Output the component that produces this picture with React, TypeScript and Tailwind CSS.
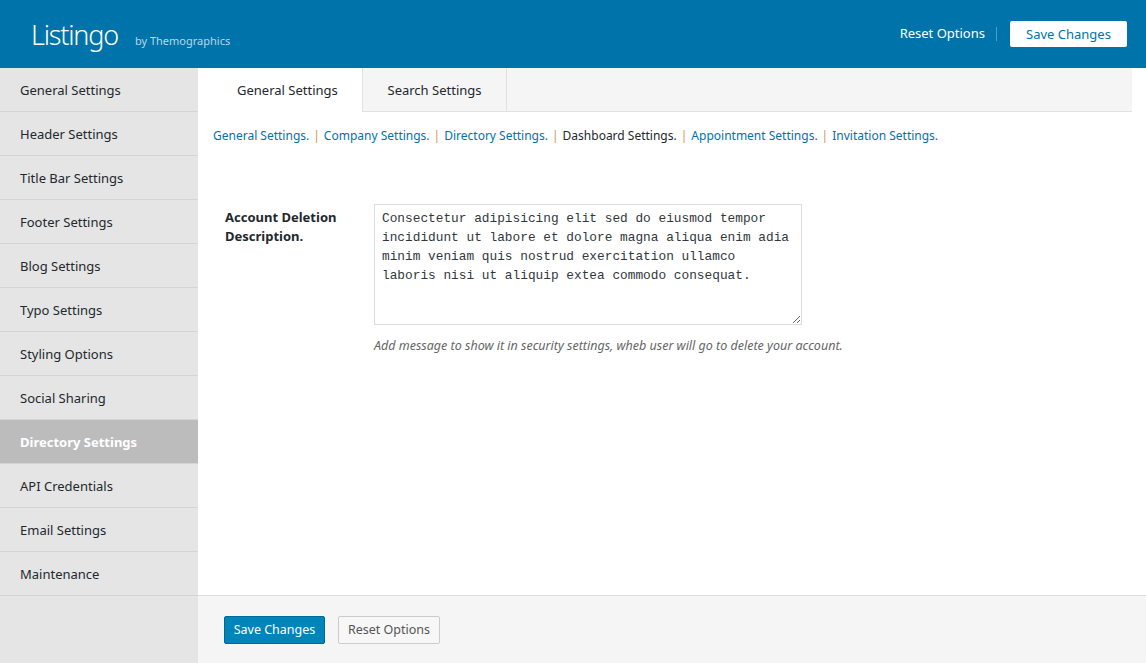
import React from "react";

const sideItems = [
  "General Settings",
  "Header Settings",
  "Title Bar Settings",
  "Footer Settings",
  "Blog Settings",
  "Typo Settings",
  "Styling Options",
  "Social Sharing",
  "Directory Settings",
  "API Credentials",
  "Email Settings",
  "Maintenance",
];

const subLinks = [
  "General Settings.",
  "Company Settings.",
  "Directory Settings.",
  "Dashboard Settings.",
  "Appointment Settings.",
  "Invitation Settings.",
];

export default function App() {
  const font = { fontFamily: '"Noto Sans", "Open Sans", sans-serif' };
  return (
    <div className="w-[1146px] h-[663px] bg-white flex flex-col overflow-hidden text-[13px] text-[#23282d]" style={font}>
      {/* Header */}
      <div className="h-[68px] bg-[#0073aa] flex items-center pl-[31px] pr-[19px] shrink-0">
        <div className="text-[27px] font-light text-white leading-none tracking-[-1.2px]">Listingo</div>
        <div className="ml-[17px] mt-[14px] text-[11px] text-[#b9d7e7]">by Themographics</div>
        <div className="ml-auto flex items-center">
          <span className="text-white text-[13px]">Reset Options</span>
          <span className="mx-[11px] w-px h-[14px] bg-[#4d9cc4]" />
          <button className="ml-[2px] w-[117px] h-[26px] pt-[1px] bg-white rounded-[2px] text-[#0073aa] text-[13px]">
            Save Changes
          </button>
        </div>
      </div>

      <div className="flex flex-1 min-h-0">
        {/* Sidebar */}
        <div className="w-[198px] bg-[#e5e5e5] shrink-0 flex flex-col">
          {sideItems.map((s) => {
            const active = s === "Directory Settings";
            return (
              <div
                key={s}
                className={
                  "h-[44px] pl-[20px] pt-[2px] flex items-center border-b border-[#d4d4d4] " +
                  (active ? "bg-[#bcbcbc] text-white font-bold" : "text-[#23282d]")
                }
              >
                {s}
              </div>
            );
          })}
        </div>

        {/* Main */}
        <div className="flex-1 flex flex-col min-w-0">
          <div className="flex flex-1 min-h-0">
            <div className="w-[934px] flex flex-col">
              {/* Tabs */}
              <div className="h-[44px] bg-[#f5f5f5] border-b border-[#e1e1e1] flex shrink-0">
                <div className="w-[164px] h-[44px] pt-[2px] bg-white flex items-center pl-[39px] text-[#23282d]">
                  General Settings
                </div>
                <div className="w-[145px] h-[43px] pt-[2px] border-l border-r border-[#e1e1e1] flex items-center justify-center text-[#23282d]">
                  Search Settings
                </div>
              </div>
              {/* Sub links */}
              <div className="pl-[15px] pt-[15px] flex items-center text-[12px] leading-[18px]">
                {subLinks.map((l, i) => (
                  <React.Fragment key={l}>
                    {i > 0 && <span className="mx-[4px] text-[#d9904a]">|</span>}
                    <span className={l === "Dashboard Settings." ? "text-[#23282d]" : "text-[#0073aa]"}>{l}</span>
                  </React.Fragment>
                ))}
              </div>
              {/* Field */}
              <div className="flex pl-[27px] pt-[59px]">
                <div className="w-[149px] font-bold text-[13px] leading-[19px] text-[#23282d] pt-[4px]">
                  Account Deletion
                  <br />
                  Description.
                </div>
                <div className="flex flex-col">
                  <textarea
                    className="w-[428px] h-[121px] border border-[#dddddd] rounded-none px-[7px] py-[4px] text-[12.8px] leading-[19px] text-[#32373c] resize-y outline-none"
                    style={{ fontFamily: '"Liberation Mono", monospace' }}
                    defaultValue="Consectetur adipisicing elit sed do eiusmod tempor incididunt ut labore et dolore magna aliqua enim adia minim veniam quis nostrud exercitation ullamco laboris nisi ut aliquip extea commodo consequat."
                  />
                  <div className="mt-[12px] text-[12.5px] italic text-[#666]">
                    Add message to show it in security settings, wheb user will go to delete your account.
                  </div>
                </div>
              </div>
            </div>
          </div>
          {/* Footer */}
          <div className="h-[68px] bg-[#f5f5f5] border-t border-[#dedede] flex items-center pl-[26px] gap-[13px] shrink-0">
            <button className="h-[28px] w-[101px] pt-[2px] bg-[#0085ba] border border-[#006799] rounded-[2px] text-white text-[12.5px]">
              Save Changes
            </button>
            <button className="h-[28px] w-[102px] pt-[2px] bg-[#f7f7f7] border border-[#cccccc] rounded-[2px] text-[#555] text-[12.5px]">
              Reset Options
            </button>
          </div>
        </div>
      </div>
    </div>
  );
}
